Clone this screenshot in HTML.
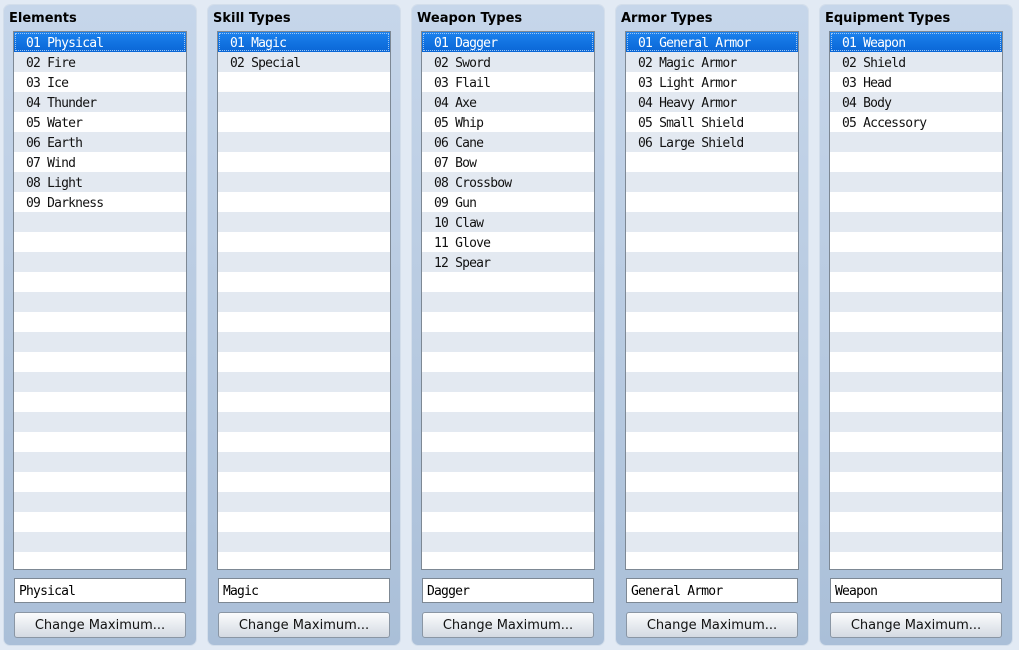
<!DOCTYPE html>
<html><head><style>
body{margin:0;width:1019px;height:650px;background:#e2eaf4;font-family:"DejaVu Sans","Liberation Sans",sans-serif;overflow:hidden;position:relative}
.p{position:absolute;top:5px;width:192px;height:640px;border-radius:6px;background:linear-gradient(#c6d6ea,#aabfd8);box-shadow:0 0 0 1px #d3deeb}
.t{position:absolute;left:5px;top:6px;font-weight:bold;font-size:13px;color:#000}
.l{position:absolute;left:9px;top:26px;width:172px;height:537px;border:1px solid #7d8894;background:repeating-linear-gradient(#fff 0 20px,#e3e9f1 20px 40px);overflow:hidden}
.r{height:20px;line-height:23px;font-family:"DejaVu Sans Mono","Liberation Mono",monospace;font-size:13px;letter-spacing:-0.8px;padding-left:12px;color:#111;white-space:pre}
.r.s{background:linear-gradient(#1b82ee,#0a66d6);color:#fff;outline:1px dotted #9cc6f4;outline-offset:-2px}
.f{position:absolute;left:10px;top:573px;width:166px;height:23px;border:1px solid #7d8894;background:#fff;font-family:"DejaVu Sans Mono",monospace;font-size:13px;letter-spacing:-0.8px;line-height:26px;padding-left:4px}
.b{position:absolute;left:10px;top:607px;width:170px;height:24px;border:1px solid #8a96a4;border-radius:3px;background:linear-gradient(#fbfcfd,#d4dae2);font-size:13px;text-align:center;line-height:26px;color:#111}
</style></head><body>
<div class="p" style="left:4px"><div class="t">Elements</div><div class="l">
<div class="r s">01 Physical</div><div class="r">02 Fire</div><div class="r">03 Ice</div><div class="r">04 Thunder</div><div class="r">05 Water</div><div class="r">06 Earth</div><div class="r">07 Wind</div><div class="r">08 Light</div><div class="r">09 Darkness</div></div>
<div class="f">Physical</div><div class="b">Change Maximum...</div></div>
<div class="p" style="left:208px"><div class="t">Skill Types</div><div class="l">
<div class="r s">01 Magic</div><div class="r">02 Special</div></div>
<div class="f">Magic</div><div class="b">Change Maximum...</div></div>
<div class="p" style="left:412px"><div class="t">Weapon Types</div><div class="l">
<div class="r s">01 Dagger</div><div class="r">02 Sword</div><div class="r">03 Flail</div><div class="r">04 Axe</div><div class="r">05 Whip</div><div class="r">06 Cane</div><div class="r">07 Bow</div><div class="r">08 Crossbow</div><div class="r">09 Gun</div><div class="r">10 Claw</div><div class="r">11 Glove</div><div class="r">12 Spear</div></div>
<div class="f">Dagger</div><div class="b">Change Maximum...</div></div>
<div class="p" style="left:616px"><div class="t">Armor Types</div><div class="l">
<div class="r s">01 General Armor</div><div class="r">02 Magic Armor</div><div class="r">03 Light Armor</div><div class="r">04 Heavy Armor</div><div class="r">05 Small Shield</div><div class="r">06 Large Shield</div></div>
<div class="f">General Armor</div><div class="b">Change Maximum...</div></div>
<div class="p" style="left:820px"><div class="t">Equipment Types</div><div class="l">
<div class="r s">01 Weapon</div><div class="r">02 Shield</div><div class="r">03 Head</div><div class="r">04 Body</div><div class="r">05 Accessory</div></div>
<div class="f">Weapon</div><div class="b">Change Maximum...</div></div>
</body></html>
